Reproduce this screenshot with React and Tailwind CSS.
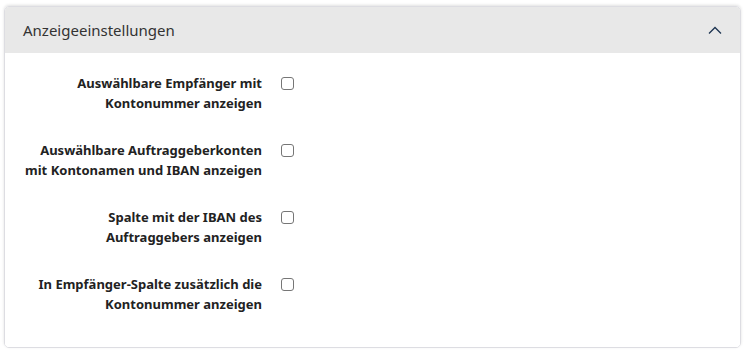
const settings = [
  "Auswählbare Empfänger mit Kontonummer anzeigen",
  "Auswählbare Auftraggeberkonten mit Kontonamen und IBAN anzeigen",
  "Spalte mit der IBAN des Auftraggebers anzeigen",
  "In Empfänger-Spalte zusätzlich die Kontonummer anzeigen",
];

const App = () => {
  return (
    <div className="w-[745px] h-[351px] bg-white pt-[6px] px-[4px] font-['Segoe_UI','Noto_Sans',sans-serif] text-[#212529]">
      <div className="w-[737px] border border-[#dddde2] rounded-[5px] shadow-[0_-1px_3px_rgba(0,0,0,0.12)] overflow-hidden">
        {/* Header */}
        <div className="h-[46px] bg-[#e8e8e8] flex items-center justify-between pl-[18px] pr-[18px]">
          <span className="text-[15px] text-[#333]">Anzeigeeinstellungen</span>
          <svg width="14" height="8" viewBox="0 0 14 8" fill="none">
            <path d="M1 7.5L7 1.5L13 7.5" stroke="#1e3552" strokeWidth="1.3" />
          </svg>
        </div>

        {/* Content */}
        <div className="bg-white pt-[20px] pb-[33px] flex flex-col gap-[27px]">
          {settings.map((label) => (
            <label key={label} className="flex items-start pl-[20px]">
              <span className="w-[237px] text-right text-[13px] font-bold leading-[20px] text-[#222]">
                {label}
              </span>
              <input
                type="checkbox"
                className="ml-[19px] mt-[4px] w-[13px] h-[13px] appearance-none border border-[#767676] rounded-[3px] bg-white"
              />
            </label>
          ))}
        </div>
      </div>
    </div>
  );
};

export default App;
